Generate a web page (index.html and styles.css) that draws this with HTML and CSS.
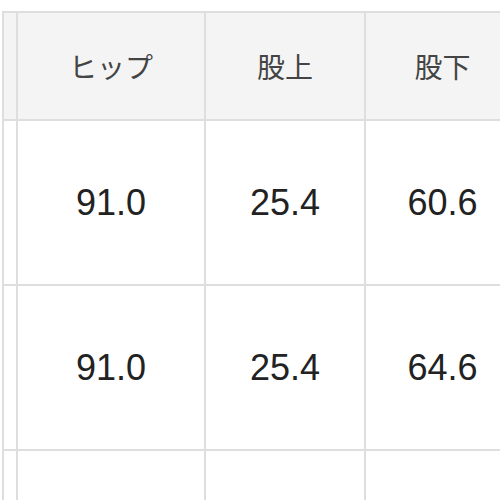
FILE: index.html
```html
<!DOCTYPE html>
<html lang="ja">
<head>
<meta charset="utf-8">
<link rel="stylesheet" href="styles.css">
</head>
<body>
<div class="viewport">
  <div class="size-table">
    <div class="cell head"></div>
    <div class="cell head">ヒップ</div>
    <div class="cell head">股上</div>
    <div class="cell head">股下</div>
    <div class="cell head"></div>

    <div class="cell"></div>
    <div class="cell">91.0</div>
    <div class="cell">25.4</div>
    <div class="cell">60.6</div>
    <div class="cell"></div>

    <div class="cell"></div>
    <div class="cell">91.0</div>
    <div class="cell">25.4</div>
    <div class="cell">64.6</div>
    <div class="cell"></div>

    <div class="cell"></div>
    <div class="cell"></div>
    <div class="cell"></div>
    <div class="cell"></div>
    <div class="cell"></div>
  </div>
</div>
</body>
</html>
```

FILE: styles.css
```css
html, body {
  margin: 0;
  padding: 0;
  background: #ffffff;
}

.viewport {
  width: 500px;
  height: 500px;
  overflow: hidden;
  padding: 11px 0 0 2px;
  box-sizing: border-box;
}

.size-table {
  display: grid;
  grid-template-columns: 12px 186px 158px 153px 158px;
  grid-template-rows: 106px 163px 163px 163px;
  gap: 2px;
  padding: 2px;
  background: #dedede;
  width: max-content;
  font-family: "Liberation Sans", "Noto Sans CJK JP", sans-serif;
}

.cell {
  background: #ffffff;
  display: flex;
  align-items: center;
  justify-content: center;
  font-size: 36px;
  color: #222222;
}

.cell.head {
  background: #f4f4f4;
  font-family: "Noto Sans CJK JP", sans-serif;
  font-size: 28px;
  color: #444444;
}
```
